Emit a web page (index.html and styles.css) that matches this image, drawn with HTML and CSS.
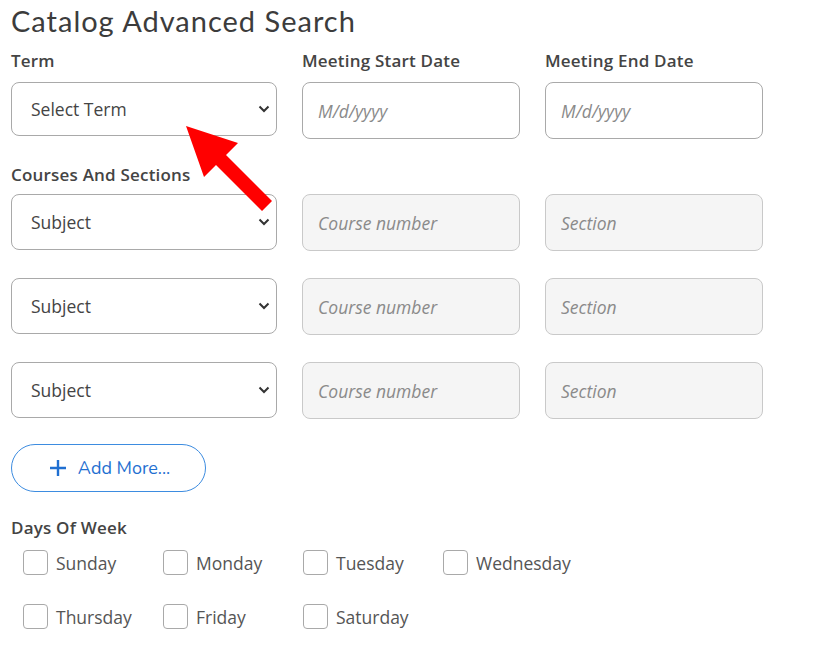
FILE: index.html
```html
<!DOCTYPE html>
<html>
<head>
<meta charset="utf-8">
<link rel="stylesheet" href="styles.css">
</head>
<body>
<div class="page">
  <h1 class="title">Catalog Advanced Search</h1>

  <div class="grid top">
    <div class="field">
      <div class="label">Term</div>
      <div class="select"><span>Select Term</span><svg class="chev" width="12" height="8" viewBox="0 0 12 8"><path d="M1.5 1.5 L6 6 L10.5 1.5" fill="none" stroke="#333" stroke-width="2"/></svg></div>
    </div>
    <div class="field">
      <div class="label">Meeting Start Date</div>
      <input class="input" placeholder="M/d/yyyy">
    </div>
    <div class="field">
      <div class="label">Meeting End Date</div>
      <input class="input" placeholder="M/d/yyyy">
    </div>
  </div>

  <div class="label courses-label">Courses And Sections</div>
  <div class="grid rows">
    <div class="select"><span>Subject</span><svg class="chev" width="12" height="8" viewBox="0 0 12 8"><path d="M1.5 1.5 L6 6 L10.5 1.5" fill="none" stroke="#333" stroke-width="2"/></svg></div>
    <input class="input grey" placeholder="Course number">
    <input class="input grey" placeholder="Section">
    <div class="select"><span>Subject</span><svg class="chev" width="12" height="8" viewBox="0 0 12 8"><path d="M1.5 1.5 L6 6 L10.5 1.5" fill="none" stroke="#333" stroke-width="2"/></svg></div>
    <input class="input grey" placeholder="Course number">
    <input class="input grey" placeholder="Section">
    <div class="select"><span>Subject</span><svg class="chev" width="12" height="8" viewBox="0 0 12 8"><path d="M1.5 1.5 L6 6 L10.5 1.5" fill="none" stroke="#333" stroke-width="2"/></svg></div>
    <input class="input grey" placeholder="Course number">
    <input class="input grey" placeholder="Section">
  </div>

  <button class="add"><svg width="18" height="18" viewBox="0 0 18 18"><path d="M9 1 V17 M1 9 H17" stroke="#1f6fd1" stroke-width="2.4" fill="none"/></svg><span>Add More...</span></button>

  <div class="label days-label">Days Of Week</div>
  <div class="days">
    <label class="day"><span class="box"></span>Sunday</label>
    <label class="day"><span class="box"></span>Monday</label>
    <label class="day"><span class="box"></span>Tuesday</label>
    <label class="day"><span class="box"></span>Wednesday</label>
    <label class="day"><span class="box"></span>Thursday</label>
    <label class="day"><span class="box"></span>Friday</label>
    <label class="day"><span class="box"></span>Saturday</label>
  </div>

  <svg class="arrow" width="100" height="100" viewBox="0 0 100 100">
    <polygon points="0,0 52,17 40,29 86,75 76,85 30,39 18,51" fill="#ff0000"/>
  </svg>
</div>
</body>
</html>
```

FILE: styles.css
```css
html, body {
  margin: 0;
  padding: 0;
  background: #fff;
}
.page {
  position: relative;
  padding: 0 0 0 11px;
  font-family: "Open Sans", "Liberation Sans", sans-serif;
  color: #444;
}
.title {
  margin: 0;
  padding-top: 3px;
  font-family: "Lato", "Open Sans", sans-serif;
  font-weight: 400;
  font-size: 29px;
  line-height: 36px;
  letter-spacing: 1px;
  color: #3c3c3c;
}
.label {
  font-size: 17px;
  font-weight: 600;
  line-height: 22px;
  color: #444;
  letter-spacing: 0.2px;
}
.grid {
  display: grid;
  grid-template-columns: 266px 218px 218px;
  column-gap: 25px;
}
.top {
  margin-top: 11px;
}
.field .label {
  margin-bottom: 10px;
}
.select {
  box-sizing: border-box;
  height: 54px;
  border: 1px solid #a9a9a9;
  border-radius: 8px;
  display: flex;
  align-items: center;
  justify-content: space-between;
  padding: 0 6px 0 19px;
  font-size: 17.5px;
  color: #444;
  background: #fff;
}
.chev {
  display: block;
}
.input {
  box-sizing: border-box;
  width: 100%;
  height: 57px;
  border: 1px solid #a9a9a9;
  border-radius: 8px;
  padding: 0 15px;
  font-family: "Open Sans", "Liberation Sans", sans-serif;
  font-size: 17.5px;
  background: #fff;
  outline: none;
  margin: 0;
}
.input::placeholder {
  font-style: italic;
  color: #8a8a8a;
}
.input.grey {
  background: #f5f5f5;
  border-color: #c9c9c9;
}
.courses-label {
  margin-top: 25px;
}
.rows {
  margin-top: 8px;
  row-gap: 27px;
  align-items: start;
}
.rows .select {
  height: 56px;
}
.add {
  margin-top: 25px;
  box-sizing: border-box;
  width: 195px;
  height: 48px;
  border: 1.5px solid #3d8ce0;
  border-radius: 24px;
  background: #fff;
  display: flex;
  align-items: center;
  justify-content: center;
  gap: 11px;
  padding: 0 0 0 2px;
  font-family: "Nunito", "Lato", sans-serif;
  font-size: 18px;
  color: #1f6fd1;
}
.days-label {
  margin-top: 25px;
}
.days {
  margin-top: 11px;
  padding-left: 12px;
  display: grid;
  grid-template-columns: repeat(4, 140px);
  row-gap: 29px;
}
.day {
  display: flex;
  align-items: center;
  gap: 8px;
  font-size: 17.5px;
  color: #555;
  height: 25px;
}
.box {
  box-sizing: border-box;
  width: 25px;
  height: 25px;
  border: 1px solid #a9a9a9;
  border-radius: 4px;
  background: #fff;
  flex: none;
}
.arrow {
  position: absolute;
  left: 186px;
  top: 126px;
}
```
